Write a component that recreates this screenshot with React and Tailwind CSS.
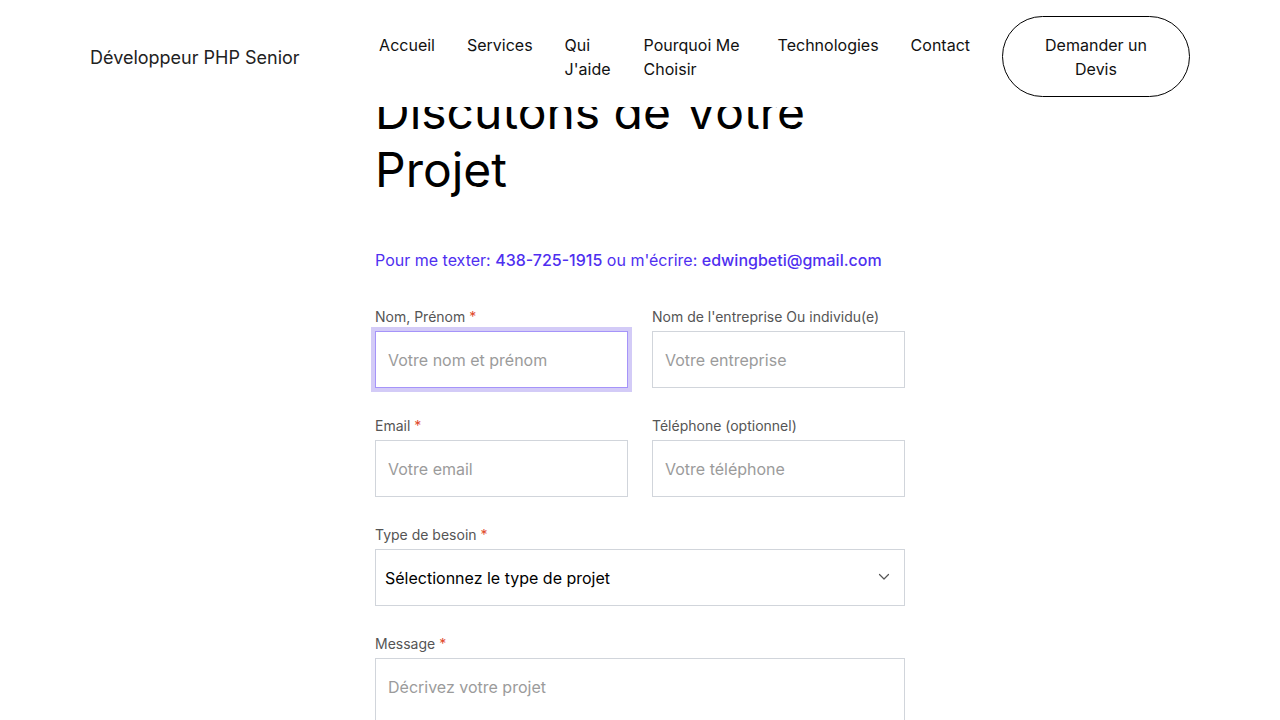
import React from 'react';

const navLinks = [
  { label: 'Accueil', w: '' },
  { label: 'Services', w: '' },
  { label: "Qui J'aide", w: 'w-[47px]' },
  { label: 'Pourquoi Me Choisir', w: 'w-[102px]' },
  { label: 'Technologies', w: '' },
  { label: 'Contact', w: '' },
];

const Header = () => (
  <header className="fixed top-0 left-0 right-0 z-50 bg-white">
    <div className="max-w-[1100px] mx-auto pt-4 pb-[10px] flex items-center justify-between">
      <span className="text-[18px] leading-7 pt-[2px] text-[#222]">Développeur PHP Senior</span>
      <div className="flex items-center gap-8">
        <nav className="flex items-start gap-8 pl-[1px] text-base leading-6 text-[#111]">
          {navLinks.map((l) => (
            <a key={l.label} href="#" className={l.w}>
              {l.label}
            </a>
          ))}
        </nav>
        <button className="w-[188px] h-[81px] rounded-full border border-black text-base leading-6 text-[#111] px-10">
          Demander un Devis
        </button>
      </div>
    </div>
  </header>
);

const Label = ({ children, required }) => (
  <label className="block h-5 mb-1 text-sm leading-5 text-[#555]">
    {children}
    {required && <span className="text-[#e0492a]"> *</span>}
  </label>
);

const inputBase =
  'w-full h-[57px] border bg-white px-3 text-base text-[#111] placeholder:text-[#9b9b9b] outline-none';

const ContactForm = () => (
  <form className="w-full">
    <div className="grid grid-cols-2 gap-x-6">
      <div className="mb-[28px]">
        <Label required>Nom, Prénom</Label>
        <input
          className={`${inputBase} border-[#a594f9] ring-4 ring-[#d3cbf7]`}
          placeholder="Votre nom et prénom"
        />
      </div>
      <div className="mb-[28px]">
        <Label>Nom de l'entreprise Ou individu(e)</Label>
        <input className={`${inputBase} border-[#d1d5db]`} placeholder="Votre entreprise" />
      </div>
      <div className="mb-[28px]">
        <Label required>Email</Label>
        <input className={`${inputBase} border-[#d1d5db]`} placeholder="Votre email" />
      </div>
      <div className="mb-[28px]">
        <Label>Téléphone (optionnel)</Label>
        <input className={`${inputBase} border-[#d1d5db]`} placeholder="Votre téléphone" />
      </div>
    </div>

    <div className="mb-[28px]">
      <Label required>Type de besoin</Label>
      <div className="relative">
        <select className="w-full h-[57px] appearance-none border border-[#d1d5db] bg-white pl-[9px] text-base text-black outline-none">
          <option>Sélectionnez le type de projet</option>
        </select>
        <svg
          className="absolute right-[15px] top-[24px] pointer-events-none"
          width="12"
          height="8"
          viewBox="0 0 12 8"
          fill="none"
        >
          <path d="M1.5 1.5L6 6L10.5 1.5" stroke="#555" strokeWidth="1.2" strokeLinecap="round" strokeLinejoin="round" />
        </svg>
      </div>
    </div>

    <div>
      <Label required>Message</Label>
      <textarea
        className="w-full h-[160px] border border-[#d1d5db] bg-white px-3 pt-[16px] text-base leading-6 placeholder:text-[#9b9b9b] outline-none resize-none"
        placeholder="Décrivez votre projet"
      />
    </div>
  </form>
);

export default function App() {
  return (
    <div className="min-h-screen bg-white" style={{ fontFamily: 'Inter, "Noto Sans", sans-serif' }}>
      <Header />
      <main className="pt-[83px] pb-20">
        <div className="max-w-[530px] mx-auto">
          <h1 className="text-[48px] leading-[1.2] font-normal text-black mb-[50px]">
            Discutons de Votre Projet
          </h1>
          <p className="text-base leading-6 text-[#4f2ff0] mb-[35px]">
            Pour me texter: <span className="font-medium">438-725-1915</span> ou m'écrire:{' '}
            <span className="font-medium">edwingbeti@gmail.com</span>
          </p>
          <ContactForm />
        </div>
      </main>
    </div>
  );
}
